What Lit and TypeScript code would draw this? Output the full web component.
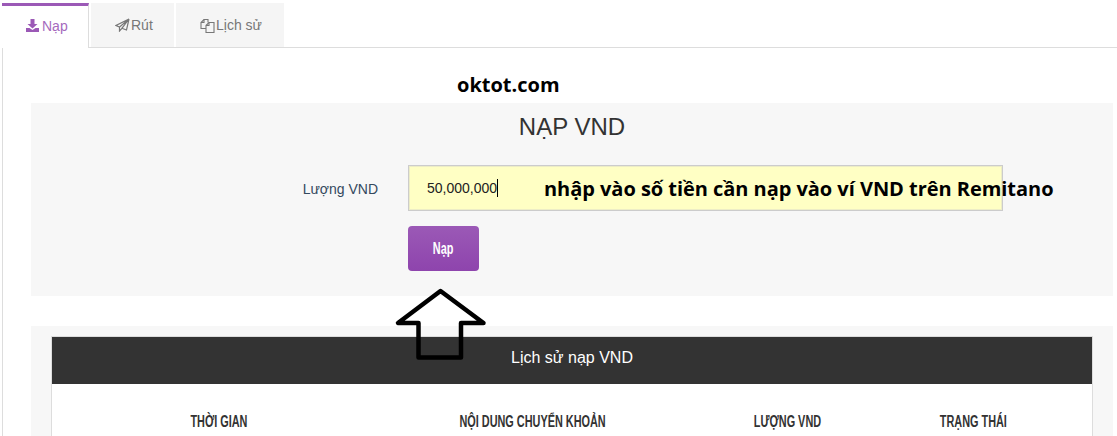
import { LitElement, html, css } from "lit";
import { customElement } from "lit/decorators.js";

const cols = ["THỜI GIAN", "NỘI DUNG CHUYỂN KHOẢN", "LƯỢNG VND", "TRẠNG THÁI"];

@customElement("app-root")
export class AppRoot extends LitElement {
  static styles = css`
    :host { display: block; position: relative; width: 1117px; height: 436px; overflow: hidden; background: #fff; font-family: "Liberation Sans", Arial, sans-serif; color: #333; }
    .tabs { display: flex; height: 48px; padding: 3px 0 0 2px; box-sizing: border-box; }
    .tab { display: flex; align-items: center; height: 44px; background: #f5f5f5; color: #777; font-size: 14px; margin-right: 2px; box-sizing: border-box; }
    .tab svg { display: block; }
    .t1 { width: 87px; height: 45px; background: #fff; color: #a569bd; border-top: 3px solid #9b59b6; border-right: 1px solid #ddd; margin-right: 2px; padding: 0 0 3px 24px; gap: 3px; }
    .t2 { width: 83px; padding-left: 24px; gap: 1px; }
    .t3 { width: 108px; margin-right: 0; padding-left: 24px; gap: 1px; }
    .tabrule { position: absolute; left: 89px; right: 0; top: 47px; height: 1px; background: #ddd; }
    .body { border-left: 1px solid #ddd; margin-left: 2px; padding-left: 28px; padding-right: 4px; height: 388px; box-sizing: border-box; }
    .brand { height: 55px; padding: 25px 0 0 426px; box-sizing: border-box; font: 700 20px/24px "Open Sans", sans-serif; color: #000; }
    .panel { height: 193px; background: #f7f7f7; box-sizing: border-box; padding-top: 8px; }
    .panel h2 { margin: 0; height: 54px; font-size: 24px; line-height: 32px; font-weight: 400; text-align: center; color: #333; }
    .row { display: flex; align-items: center; height: 46px; }
    .label { width: 347px; text-align: right; font-size: 14px; line-height: 18px; padding-top: 2px; color: #34495e; }
    .input { position: relative; margin-left: 30px; width: 595px; height: 46px; box-sizing: border-box; background: #ffffc4; border: 1px solid #ccc; box-shadow: inset 0 0 0 1px rgba(204, 204, 204, 0.35); padding-left: 18px; display: flex; align-items: center; font-size: 14px; color: #222; }
    .caret { width: 1px; height: 18px; background: #000; }
    .note { position: absolute; left: 135px; top: 11px; white-space: nowrap; font: 700 20px/24px "Open Sans", sans-serif; letter-spacing: -0.04px; color: #000; }
    .btn { display: flex; align-items: center; justify-content: center; margin: 15px 0 0 377px; width: 71px; height: 45px; border-radius: 4px; background: linear-gradient(#9b59b6, #8e44ad); color: #fff; font: 700 16px "Liberation Sans", sans-serif; }
    .narrow { display: inline-block; transform: scaleX(0.68); white-space: nowrap; }
    .panel2 { margin-top: 30px; height: 110px; background: #f7f7f7; padding: 10px 20px 0; box-sizing: border-box; }
    .card { border: solid #ddd; border-width: 1px 1px 0; height: 100px; background: #fff; }
    .head { height: 47px; background: #333; color: #fff; display: flex; align-items: center; justify-content: center; font-size: 16px; padding-bottom: 5px; box-sizing: border-box; }
    .cols { display: grid; grid-template-columns: 334px 293px 216px 156px; padding-top: 28px; font: 700 16px/20px "Liberation Sans", sans-serif; color: #333; text-align: center; }
    .arrow { position: absolute; left: 390px; top: 284px; }
  `;

  render() {
    return html`
      <div class="tabs">
        <div class="tab t1">
          <svg width="13" height="13" viewBox="0 0 13 13" fill="#9b59b6"><path d="M4.500 0h4v5h3L6.500 9.500 1.500 5h3z"/><path d="M0 9h3.500l3 2 3-2H13v4H0z"/></svg>
          <span>Nạp</span>
        </div>
        <div class="tab t2">
          <svg width="15" height="14" viewBox="0 0 15 14" fill="none" stroke="#777" stroke-width="1.2"><path d="M14 1 1 7.500l3.500 1.600zM14 1 4.500 9.100V13l2.400-2.700M14 1l-2.500 11-4.600-1.700z"/></svg>
          <span>Rút</span>
        </div>
        <div class="tab t3">
          <svg width="15" height="15" viewBox="0 0 15 15" fill="none" stroke="#777" stroke-width="1.1"><path d="M6 10.500H1V4.500L4 1.500h4v3"/><path d="M6 7.500 9 4.500h5v10H6z"/><path d="M4 1.500v3H1M9 4.500v3H6"/></svg>
          <span>Lịch sử</span>
        </div>
      </div>
      <div class="tabrule"></div>
      <div class="body">
        <div class="brand">oktot.com</div>
        <div class="panel">
          <h2>NẠP VND</h2>
          <div class="row">
            <div class="label">Lượng VND</div>
            <div class="input">
              <span>50,000,000</span><span class="caret"></span>
              <span class="note">nhập vào số tiền cần nạp vào ví VND trên Remitano</span>
            </div>
          </div>
          <div class="btn"><span class="narrow">Nạp</span></div>
        </div>
        <div class="panel2">
          <div class="card">
            <div class="head">Lịch sử nạp VND</div>
            <div class="cols">${cols.map((t) => html`<div><span class="narrow">${t}</span></div>`)}</div>
          </div>
        </div>
      </div>
      <svg class="arrow" width="102" height="80" viewBox="390 284 102 80" fill="none" stroke="#000" stroke-width="4.5" stroke-linejoin="round"><path d="M440.500 291 398 323H418.500V357.500H461V323H483.500z"/></svg>
    `;
  }
}
